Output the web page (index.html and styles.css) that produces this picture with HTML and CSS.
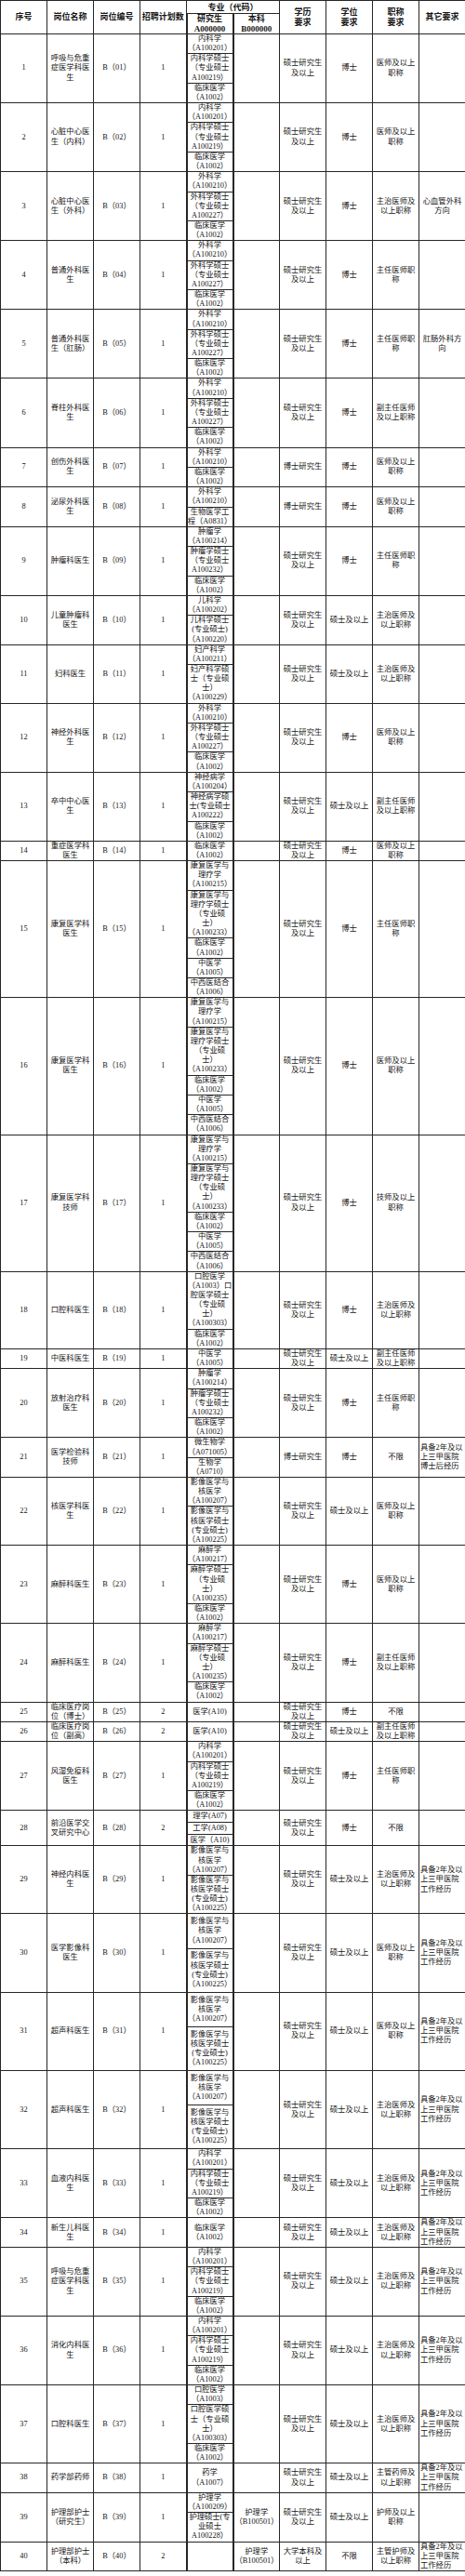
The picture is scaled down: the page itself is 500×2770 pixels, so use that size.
FILE: index.html
```html
<!DOCTYPE html>
<html lang="zh-CN">
<head>
<meta charset="utf-8">
<title>招聘岗位表</title>
<link rel="stylesheet" href="styles.css">
</head>
<body>
<table class="grid">
<colgroup><col><col><col><col><col><col><col><col><col><col></colgroup>
<thead>
<tr class="h1">
<th rowspan="2">序号</th><th rowspan="2">岗位名称</th><th rowspan="2">岗位编号</th><th rowspan="2">招聘计划数</th>
<th colspan="2" class="span">专业（代码）</th>
<th rowspan="2">学历<br>要求</th><th rowspan="2">学位<br>要求</th><th rowspan="2">职称<br>要求</th><th rowspan="2">其它要求</th>
</tr>
<tr class="h2"><th class="codes">研究生<br>A000000</th><th>本科<br>B000000</th></tr>
</thead>
<tbody>
<tr><td>1</td><td>呼吸与危重症医学科医生</td><td>B（01）</td><td>1</td><td class="codes"><div class="sub">内科学（A100201）</div><div class="sub">内科学硕士（专业硕士A100219）</div><div class="sub">临床医学（A1002）</div></td><td></td><td>硕士研究生及以上</td><td>博士</td><td>医师及以上职称</td><td></td></tr>
<tr><td>2</td><td>心脏中心医生（内科）</td><td>B（02）</td><td>1</td><td class="codes"><div class="sub">内科学（A100201）</div><div class="sub">内科学硕士（专业硕士A100219）</div><div class="sub">临床医学（A1002）</div></td><td></td><td>硕士研究生及以上</td><td>博士</td><td>医师及以上职称</td><td></td></tr>
<tr><td>3</td><td>心脏中心医生（外科）</td><td>B（03）</td><td>1</td><td class="codes"><div class="sub">外科学（A100210）</div><div class="sub">外科学硕士（专业硕士A100227）</div><div class="sub">临床医学（A1002）</div></td><td></td><td>硕士研究生及以上</td><td>博士</td><td>主治医师及以上职称</td><td>心血管外科方向</td></tr>
<tr><td>4</td><td>普通外科医生</td><td>B（04）</td><td>1</td><td class="codes"><div class="sub">外科学（A100210）</div><div class="sub">外科学硕士（专业硕士A100227）</div><div class="sub">临床医学（A1002）</div></td><td></td><td>硕士研究生及以上</td><td>博士</td><td>主任医师职称</td><td></td></tr>
<tr><td>5</td><td>普通外科医生（肛肠）</td><td>B（05）</td><td>1</td><td class="codes"><div class="sub">外科学（A100210）</div><div class="sub">外科学硕士（专业硕士A100227）</div><div class="sub">临床医学（A1002）</div></td><td></td><td>硕士研究生及以上</td><td>博士</td><td>主任医师职称</td><td>肛肠外科方向</td></tr>
<tr><td>6</td><td>脊柱外科医生</td><td>B（06）</td><td>1</td><td class="codes"><div class="sub">外科学（A100210）</div><div class="sub">外科学硕士（专业硕士A100227）</div><div class="sub">临床医学（A1002）</div></td><td></td><td>硕士研究生及以上</td><td>博士</td><td>副主任医师及以上职称</td><td></td></tr>
<tr><td>7</td><td>创伤外科医生</td><td>B（07）</td><td>1</td><td class="codes"><div class="sub">外科学（A100210）</div><div class="sub">临床医学（A1002）</div></td><td></td><td>博士研究生</td><td>博士</td><td>医师及以上职称</td><td></td></tr>
<tr><td>8</td><td>泌尿外科医生</td><td>B（08）</td><td>1</td><td class="codes"><div class="sub">外科学（A100210）</div><div class="sub">生物医学工程（A0831）</div></td><td></td><td>博士研究生</td><td>博士</td><td>医师及以上职称</td><td></td></tr>
<tr><td>9</td><td>肿瘤科医生</td><td>B（09）</td><td>1</td><td class="codes"><div class="sub">肿瘤学（A100214）</div><div class="sub">肿瘤学硕士（专业硕士A100232）</div><div class="sub">临床医学（A1002）</div></td><td></td><td>硕士研究生及以上</td><td>博士</td><td>主任医师职称</td><td></td></tr>
<tr><td>10</td><td>儿童肿瘤科医生</td><td>B（10）</td><td>1</td><td class="codes"><div class="sub">儿科学（A100202）</div><div class="sub">儿科学硕士(专业硕士)（A100220）</div></td><td></td><td>硕士研究生及以上</td><td>硕士及以上</td><td>主治医师及以上职称</td><td></td></tr>
<tr><td>11</td><td>妇科医生</td><td>B（11）</td><td>1</td><td class="codes"><div class="sub">妇产科学（A100211）</div><div class="sub">妇产科学硕士（专业硕士）（A100229）</div></td><td></td><td>硕士研究生及以上</td><td>硕士及以上</td><td>主治医师及以上职称</td><td></td></tr>
<tr><td>12</td><td>神经外科医生</td><td>B（12）</td><td>1</td><td class="codes"><div class="sub">外科学（A100210）</div><div class="sub">外科学硕士（专业硕士A100227）</div><div class="sub">临床医学（A1002）</div></td><td></td><td>硕士研究生及以上</td><td>博士</td><td>医师及以上职称</td><td></td></tr>
<tr><td>13</td><td>卒中中心医生</td><td>B（13）</td><td>1</td><td class="codes"><div class="sub">神经病学（A100204）</div><div class="sub">神经病学硕士(专业硕士A100222）</div><div class="sub">临床医学（A1002）</div></td><td></td><td>硕士研究生及以上</td><td>硕士及以上</td><td>副主任医师及以上职称</td><td></td></tr>
<tr><td>14</td><td>重症医学科医生</td><td>B（14）</td><td>1</td><td class="codes"><div class="sub">临床医学（A1002）</div></td><td></td><td>硕士研究生及以上</td><td>博士</td><td>医师及以上职称</td><td></td></tr>
<tr><td>15</td><td>康复医学科医生</td><td>B（15）</td><td>1</td><td class="codes"><div class="sub">康复医学与理疗学（A100215）</div><div class="sub">康复医学与理疗学硕士（专业硕士）（A100233）</div><div class="sub">临床医学（A1002）</div><div class="sub">中医学（A1005）</div><div class="sub">中西医结合（A1006）</div></td><td></td><td>硕士研究生及以上</td><td>博士</td><td>主任医师职称</td><td></td></tr>
<tr><td>16</td><td>康复医学科医生</td><td>B（16）</td><td>1</td><td class="codes"><div class="sub">康复医学与理疗学（A100215）</div><div class="sub">康复医学与理疗学硕士（专业硕士）（A100233）</div><div class="sub">临床医学（A1002）</div><div class="sub">中医学（A1005）</div><div class="sub">中西医结合（A1006）</div></td><td></td><td>硕士研究生及以上</td><td>博士</td><td>医师及以上职称</td><td></td></tr>
<tr><td>17</td><td>康复医学科技师</td><td>B（17）</td><td>1</td><td class="codes"><div class="sub">康复医学与理疗学（A100215）</div><div class="sub">康复医学与理疗学硕士（专业硕士）（A100233）</div><div class="sub">临床医学（A1002）</div><div class="sub">中医学（A1005）</div><div class="sub">中西医结合（A1006）</div></td><td></td><td>硕士研究生及以上</td><td>博士</td><td>技师及以上职称</td><td></td></tr>
<tr><td>18</td><td>口腔科医生</td><td>B（18）</td><td>1</td><td class="codes"><div class="sub">口腔医学（A1003）口腔医学硕士（专业硕士）（A100303）</div><div class="sub">临床医学（A1002）</div></td><td></td><td>硕士研究生及以上</td><td>博士</td><td>主治医师及以上职称</td><td></td></tr>
<tr><td>19</td><td>中医科医生</td><td>B（19）</td><td>1</td><td class="codes"><div class="sub">中医学（A1005）</div></td><td></td><td>硕士研究生及以上</td><td>硕士及以上</td><td>副主任医师及以上职称</td><td></td></tr>
<tr><td>20</td><td>放射治疗科医生</td><td>B（20）</td><td>1</td><td class="codes"><div class="sub">肿瘤学（A100214）</div><div class="sub">肿瘤学硕士（专业硕士A100232）</div><div class="sub">临床医学（A1002）</div></td><td></td><td>硕士研究生及以上</td><td>博士</td><td>主任医师职称</td><td></td></tr>
<tr><td>21</td><td>医学检验科技师</td><td>B（21）</td><td>1</td><td class="codes"><div class="sub">微生物学（A071005）</div><div class="sub">生物学（A0710）</div></td><td></td><td>博士研究生</td><td>博士</td><td>不限</td><td class="left">具备2年及以上三甲医院博士后经历</td></tr>
<tr><td>22</td><td>核医学科医生</td><td>B（22）</td><td>1</td><td class="codes"><div class="sub">影像医学与核医学（A100207）</div><div class="sub">影像医学与核医学硕士(专业硕士)（A100225）</div></td><td></td><td>硕士研究生及以上</td><td>硕士及以上</td><td>医师及以上职称</td><td></td></tr>
<tr><td>23</td><td>麻醉科医生</td><td>B（23）</td><td>1</td><td class="codes"><div class="sub">麻醉学（A100217）</div><div class="sub">麻醉学硕士（专业硕士）（A100235）</div><div class="sub">临床医学（A1002）</div></td><td></td><td>硕士研究生及以上</td><td>博士</td><td>医师及以上职称</td><td></td></tr>
<tr><td>24</td><td>麻醉科医生</td><td>B（24）</td><td>1</td><td class="codes"><div class="sub">麻醉学（A100217）</div><div class="sub">麻醉学硕士（专业硕士）（A100235）</div><div class="sub">临床医学（A1002）</div></td><td></td><td>硕士研究生及以上</td><td>博士</td><td>副主任医师及以上职称</td><td></td></tr>
<tr><td>25</td><td>临床医疗岗位（博士）</td><td>B（25）</td><td>2</td><td class="codes"><div class="sub">医学(A10)</div></td><td></td><td>硕士研究生及以上</td><td>博士</td><td>不限</td><td></td></tr>
<tr><td>26</td><td>临床医疗岗位（副高）</td><td>B（26）</td><td>2</td><td class="codes"><div class="sub">医学(A10)</div></td><td></td><td>硕士研究生及以上</td><td>硕士及以上</td><td>副主任医师及以上职称</td><td></td></tr>
<tr><td>27</td><td>风湿免疫科医生</td><td>B（27）</td><td>1</td><td class="codes"><div class="sub">内科学（A100201）</div><div class="sub">内科学硕士（专业硕士A100219）</div><div class="sub">临床医学（A1002）</div></td><td></td><td>硕士研究生及以上</td><td>博士</td><td>主任医师职称</td><td></td></tr>
<tr><td>28</td><td>前沿医学交叉研究中心</td><td>B（28）</td><td>2</td><td class="codes"><div class="sub tall">理学(A07)</div><div class="sub tall">工学(A08)</div><div class="sub tall">医学（A10)</div></td><td></td><td>硕士研究生及以上</td><td>博士</td><td>不限</td><td></td></tr>
<tr><td>29</td><td>神经内科医生</td><td>B（29）</td><td>1</td><td class="codes"><div class="sub">影像医学与核医学（A100207）</div><div class="sub">影像医学与核医学硕士(专业硕士)（A100225）</div></td><td></td><td>硕士研究生及以上</td><td>硕士及以上</td><td>主治医师及以上职称</td><td class="left">具备2年及以上三甲医院工作经历</td></tr>
<tr><td>30</td><td>医学影像科医生</td><td>B（30）</td><td>1</td><td class="codes"><div class="sub roomy">影像医学与核医学（A100207）</div><div class="sub roomy">影像医学与核医学硕士(专业硕士)（A100225）</div></td><td></td><td>硕士研究生及以上</td><td>硕士及以上</td><td>医师及以上职称</td><td class="left">具备2年及以上三甲医院工作经历</td></tr>
<tr><td>31</td><td>超声科医生</td><td>B（31）</td><td>1</td><td class="codes"><div class="sub roomy">影像医学与核医学（A100207）</div><div class="sub roomy">影像医学与核医学硕士(专业硕士)（A100225）</div></td><td></td><td>硕士研究生及以上</td><td>硕士及以上</td><td>医师及以上职称</td><td class="left">具备2年及以上三甲医院工作经历</td></tr>
<tr><td>32</td><td>超声科医生</td><td>B（32）</td><td>1</td><td class="codes"><div class="sub roomy">影像医学与核医学（A100207）</div><div class="sub roomy">影像医学与核医学硕士(专业硕士)（A100225）</div></td><td></td><td>硕士研究生及以上</td><td>硕士及以上</td><td>主治医师及以上职称</td><td class="left">具备2年及以上三甲医院工作经历</td></tr>
<tr><td>33</td><td>血液内科医生</td><td>B（33）</td><td>1</td><td class="codes"><div class="sub">内科学（A100201）</div><div class="sub">内科学硕士（专业硕士A100219）</div><div class="sub">临床医学（A1002）</div></td><td></td><td>硕士研究生及以上</td><td>硕士及以上</td><td>主治医师及以上职称</td><td class="left">具备2年及以上三甲医院工作经历</td></tr>
<tr><td>34</td><td>新生儿科医生</td><td>B（34）</td><td>1</td><td class="codes"><div class="sub">临床医学（A1002）</div></td><td></td><td>硕士研究生及以上</td><td>硕士及以上</td><td>主治医师及以上职称</td><td class="left">具备2年及以上三甲医院工作经历</td></tr>
<tr><td>35</td><td>呼吸与危重症医学科医生</td><td>B（35）</td><td>1</td><td class="codes"><div class="sub">内科学（A100201）</div><div class="sub">内科学硕士（专业硕士A100219）</div><div class="sub">临床医学（A1002）</div></td><td></td><td>硕士研究生及以上</td><td>硕士及以上</td><td>主治医师及以上职称</td><td class="left">具备2年及以上三甲医院工作经历</td></tr>
<tr><td>36</td><td>消化内科医生</td><td>B（36）</td><td>1</td><td class="codes"><div class="sub">内科学（A100201）</div><div class="sub">内科学硕士（专业硕士A100219）</div><div class="sub">临床医学（A1002）</div></td><td></td><td>硕士研究生及以上</td><td>硕士及以上</td><td>主治医师及以上职称</td><td class="left">具备2年及以上三甲医院工作经历</td></tr>
<tr><td>37</td><td>口腔科医生</td><td>B（37）</td><td>1</td><td class="codes"><div class="sub">口腔医学（A1003）</div><div class="sub">口腔医学硕士（专业硕士）（A100303）</div><div class="sub">临床医学（A1002）</div></td><td></td><td>硕士研究生及以上</td><td>硕士及以上</td><td>主治医师及以上职称</td><td class="left">具备2年及以上三甲医院工作经历</td></tr>
<tr><td>38</td><td>药学部药师</td><td>B（38）</td><td>1</td><td class="codes"><div class="sub">药学（A1007）</div></td><td></td><td>硕士研究生及以上</td><td>硕士及以上</td><td>主管药师及以上职称</td><td class="left">具备2年及以上三甲医院工作经历</td></tr>
<tr><td>39</td><td>护理部护士（研究生）</td><td>B（39）</td><td>1</td><td class="codes"><div class="sub">护理学（A100209）</div><div class="sub">护理硕士(专业硕士A100228）</div></td><td>护理学（B100501）</td><td>硕士研究生及以上</td><td>硕士及以上</td><td>护师及以上职称</td><td></td></tr>
<tr><td>40</td><td>护理部护士（本科）</td><td>B（40）</td><td>2</td><td class="codes"></td><td>护理学（B100501）</td><td>大学本科及以上</td><td>不限</td><td>主管护师及以上职称</td><td class="left">具备2年及以上三甲医院工作经历</td></tr>
</tbody>
</table>
</body>
</html>
```

FILE: styles.css
```css
html, body {
  margin: 0;
  padding: 0;
  background: #ffffff;
}

body {
  font-family: "Liberation Serif", "Noto Sans CJK SC", serif;
  color: #141414;
  text-spacing-trim: space-all;
}

.grid {
  border-collapse: collapse;
  table-layout: fixed;
  width: 500px;
}

.grid col {
  width: 50px;
}

.grid th,
.grid td {
  border: 1px solid #262626;
  padding: 0 1px;
  text-align: center;
  vertical-align: middle;
  font-size: 8.3px;
  line-height: 10.15px;
  font-weight: 400;
  overflow: hidden;
}

.grid th {
  font-weight: 700;
  font-size: 9px;
  line-height: 10.5px;
}

.grid .h1 {
  height: 14px;
}

.grid .h2 {
  height: 21px;
}

.grid .span {
  line-height: 12px;
}

.grid .codes {
  padding: 0;
  border-left: 2px solid #262626;
  border-right: 2px solid #262626;
}

.sub {
  border-top: 1px solid #262626;
}

.sub:first-child {
  border-top: 0;
}

.sub.tall {
  line-height: 11.7px;
}

.sub.roomy {
  padding: 2.8px 0;
}

.grid td.left {
  text-align: left;
}
```
